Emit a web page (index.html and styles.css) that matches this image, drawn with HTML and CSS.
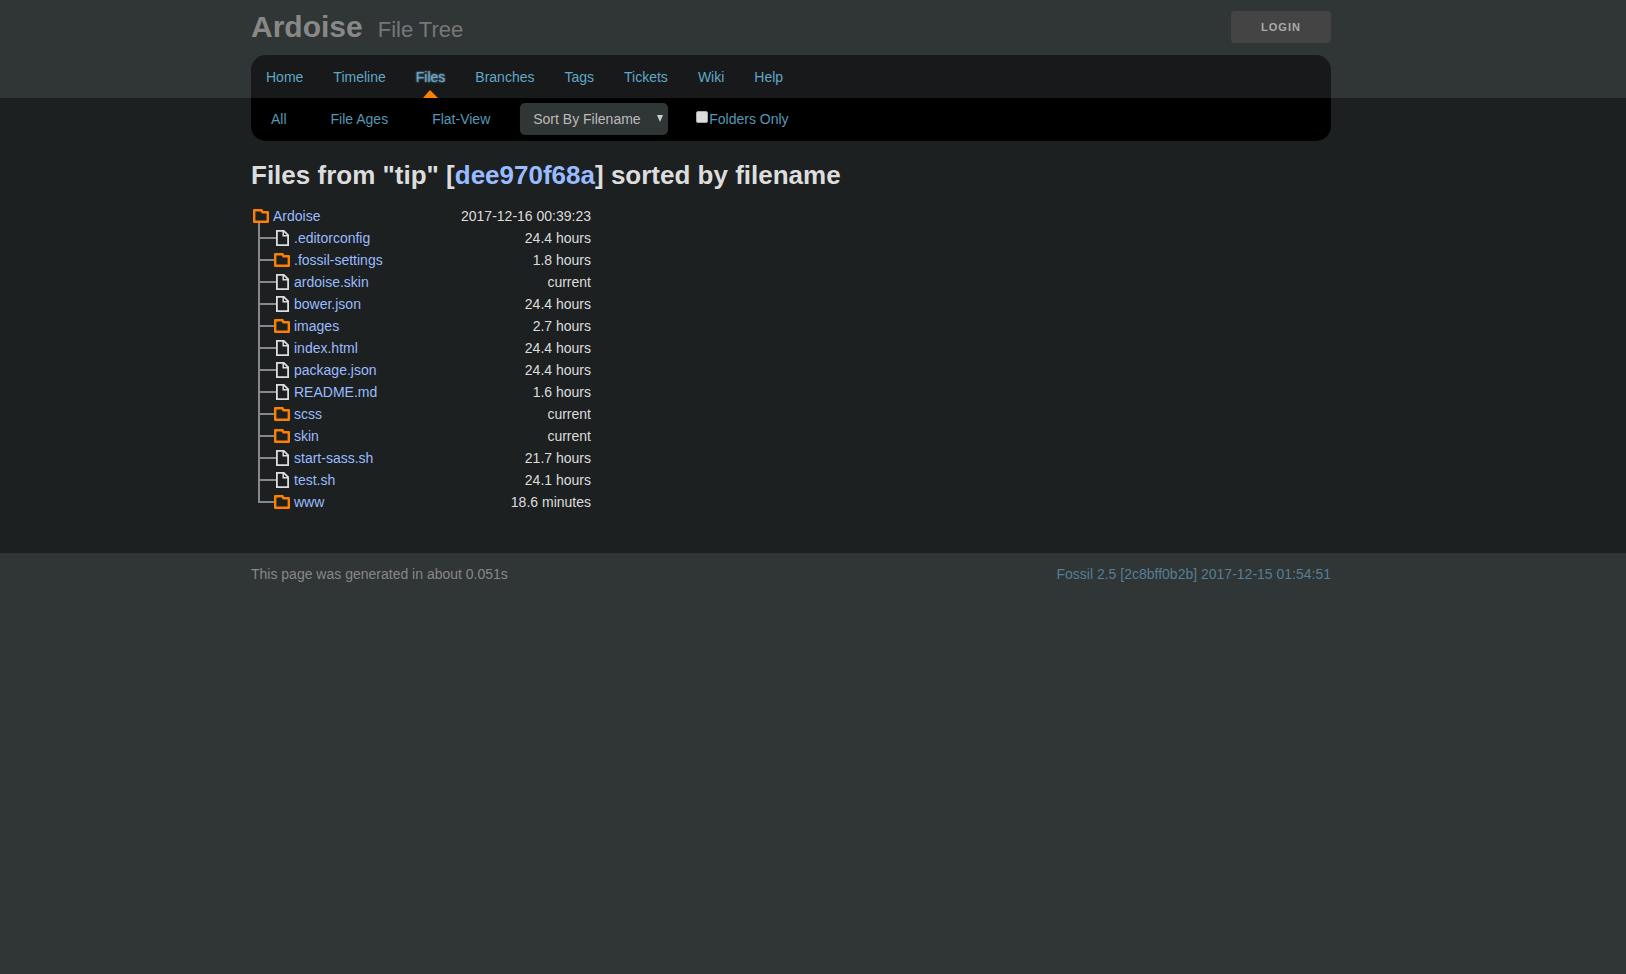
FILE: index.html
```html
<!DOCTYPE html>
<html lang="en">
<head>
  <meta charset="UTF-8">
  <meta name="viewport" content="width=device-width, initial-scale=1.0">
  <title>Ardoise: File Tree</title>
  <link rel="stylesheet" href="styles.css">
</head>
<body>
  <!-- Icons shared by the tree rows -->
  <svg class="sprite" width="0" height="0" aria-hidden="true">
    <symbol id="folder" viewBox="0 0 16 14">
      <path d="M1.200 1.200H8.600L9.400 3.200H14.800V12.800H1.200Z" fill="#1d2021" stroke="#ff8000" stroke-width="2.400" stroke-linejoin="round"/>
    </symbol>
    <symbol id="file" viewBox="0 0 16 16">
      <path d="M2.900 .9H9.800L14.100 5.200V15.100H2.900Z" fill="#1d2021" stroke="#ddd" stroke-width="1.800"/>
      <path d="M9.200 1V5.800H14" fill="none" stroke="#ddd" stroke-width="1.500"/>
    </symbol>
  </svg>

  <header class="header">
    <div class="container">
      <div class="title-bar">
        <h1>Ardoise</h1>
        <span class="page-title">File Tree</span>
        <button class="login" type="button">Login</button>
      </div>
      <nav class="mainmenu">
        <a href="#">Home</a>
        <a href="#">Timeline</a>
        <a href="#" class="active">Files</a>
        <a href="#">Branches</a>
        <a href="#">Tags</a>
        <a href="#">Tickets</a>
        <a href="#">Wiki</a>
        <a href="#">Help</a>
      </nav>
    </div>
  </header>

  <main class="middle">
    <div class="container">
      <form class="submenu">
        <a href="#">All</a>
        <a href="#">File Ages</a>
        <a href="#">Flat-View</a>
        <select aria-label="Sort order">
          <option>Sort By Filename</option>
          <option>Sort By Age</option>
        </select>
        <label class="check"><input type="checkbox">Folders Only</label>
      </form>

      <h2>Files from "tip" [<a href="#">dee970f68a</a>] sorted by filename</h2>

      <ul class="tree">
        <li>
          <div class="row root"><svg class="folder"><use href="#folder"/></svg><a href="#">Ardoise</a><span class="age">2017-12-16 00:39:23</span></div>
          <ul>
            <li class="row"><svg class="file"><use href="#file"/></svg><a href="#">.editorconfig</a><span class="age">24.4 hours</span></li>
            <li class="row dir"><svg class="folder"><use href="#folder"/></svg><a href="#">.fossil-settings</a><span class="age">1.8 hours</span></li>
            <li class="row"><svg class="file"><use href="#file"/></svg><a href="#">ardoise.skin</a><span class="age">current</span></li>
            <li class="row"><svg class="file"><use href="#file"/></svg><a href="#">bower.json</a><span class="age">24.4 hours</span></li>
            <li class="row dir"><svg class="folder"><use href="#folder"/></svg><a href="#">images</a><span class="age">2.7 hours</span></li>
            <li class="row"><svg class="file"><use href="#file"/></svg><a href="#">index.html</a><span class="age">24.4 hours</span></li>
            <li class="row"><svg class="file"><use href="#file"/></svg><a href="#">package.json</a><span class="age">24.4 hours</span></li>
            <li class="row"><svg class="file"><use href="#file"/></svg><a href="#">README.md</a><span class="age">1.6 hours</span></li>
            <li class="row dir"><svg class="folder"><use href="#folder"/></svg><a href="#">scss</a><span class="age">current</span></li>
            <li class="row dir"><svg class="folder"><use href="#folder"/></svg><a href="#">skin</a><span class="age">current</span></li>
            <li class="row"><svg class="file"><use href="#file"/></svg><a href="#">start-sass.sh</a><span class="age">21.7 hours</span></li>
            <li class="row"><svg class="file"><use href="#file"/></svg><a href="#">test.sh</a><span class="age">24.1 hours</span></li>
            <li class="row dir last"><svg class="folder"><use href="#folder"/></svg><a href="#">www</a><span class="age">18.6 minutes</span></li>
          </ul>
        </li>
      </ul>
    </div>
  </main>

  <footer class="footer">
    <div class="container">
      <span>This page was generated in about 0.051s</span>
      <a href="#">Fossil 2.5 [2c8bff0b2b] 2017-12-15 01:54:51</a>
    </div>
  </footer>
</body>
</html>
```
FILE: styles.css
```css
* {
  box-sizing: border-box;
}
body {
  margin: 0;
  background: #303536;
  color: #ddd;
  font-family: "Liberation Sans", Arial, sans-serif;
  font-size: 14px;
  line-height: 22px;
}
a {
  color: #9bf;
  text-decoration: none;
}
.sprite {
  position: absolute;
}
.header,
.middle,
.footer {
  padding: 0 44px 0 0;
}
.container {
  max-width: 1080px;
  margin: 0 auto;
}

/* Header */
.title-bar {
  display: flex;
  align-items: baseline;
  height: 55px;
  padding-top: 10px;
  color: #888;
}
h1 {
  margin: 0 15px 0 0;
  font-size: 30px;
  line-height: 34px;
}
.page-title {
  font-size: 22px;
  color: #777;
}
.login {
  align-self: flex-start;
  width: 100px;
  height: 32px;
  margin: 1px 0 0 auto;
  border: 0;
  border-radius: 4px;
  background: #444;
  color: #aaa;
  font: bold 11px "Liberation Sans", Arial, sans-serif;
  letter-spacing: 1px;
  text-transform: uppercase;
  cursor: pointer;
}
.mainmenu {
  display: flex;
  flex-wrap: wrap;
  background: #18191a;
  border-radius: 15px 15px 0 0;
}
.mainmenu a {
  position: relative;
  padding: 11px 15px 10px;
  color: #60a8c8;
}
.mainmenu .active {
  text-shadow: 0 0 2px #9bd;
}
.mainmenu .active::after {
  content: "";
  position: absolute;
  left: 50%;
  bottom: 0;
  margin-left: -8px;
  border: solid transparent;
  border-width: 0 8px 8px 7px;
  border-bottom-color: #ff8000;
}

/* Content */
.middle {
  background: #1d2021;
  padding-bottom: 40px;
}
.submenu {
  display: flex;
  flex-wrap: wrap;
  align-items: center;
  gap: 4px;
  min-height: 43px;
  padding-bottom: 1px;
  background: #000;
  border-radius: 0 0 15px 15px;
}
.submenu a {
  padding: 0 20px;
  color: #5598b5;
}
.submenu select {
  width: 148px;
  height: 32px;
  margin: 0 5px 0 6px;
  padding: 0 13px;
  border: 0;
  border-radius: 5px;
  appearance: none;
  background: #303536 url("data:image/svg+xml,%3Csvg xmlns='http://www.w3.org/2000/svg' width='6' height='7'%3E%3Cpath d='M0 0H6L3 7Z' fill='%23ccc'/%3E%3C/svg%3E") no-repeat right 5px top 12px;
  color: #bbb;
  font: inherit;
}
.check {
  display: flex;
  align-items: center;
  padding: 0 19px;
  color: #5598b5;
}
.check input {
  appearance: none;
  width: 12px;
  height: 12px;
  margin: 0 1px 4px 0;
  border: 1px solid #aaa;
  border-radius: 2px;
  background: #ddd;
}
.check input:checked {
  background: #ff8000;
}
h2 {
  margin: 18px 0 14px;
  font-size: 26px;
  line-height: 32px;
}

/* File tree */
.tree,
.tree ul {
  margin: 0;
  padding: 0;
  list-style: none;
}
.tree {
  max-width: 340px;
}
.row {
  display: flex;
  align-items: center;
  gap: 4px;
  height: 22px;
  padding-left: 23px;
  background:
    linear-gradient(#888, #888) 7px 0 / 2px 22px no-repeat,
    linear-gradient(#888, #888) 9px 10px / 16px 2px no-repeat;
}
.row.root {
  padding-left: 2px;
  background: linear-gradient(#888, #888) 7px 100% / 2px 4px no-repeat;
}
.row.dir {
  background-size: 2px 22px, 14px 2px;
}
.row.last {
  background-size: 2px 12px, 14px 2px;
}
.folder {
  width: 16px;
  height: 14px;
}
.file {
  width: 16px;
  height: 16px;
}
.age {
  margin-left: auto;
}

/* Footer */
.footer .container {
  display: flex;
  flex-wrap: wrap;
  justify-content: space-between;
  padding: 10px 0;
  color: #888;
}
.footer a {
  color: #557f95;
}
```
